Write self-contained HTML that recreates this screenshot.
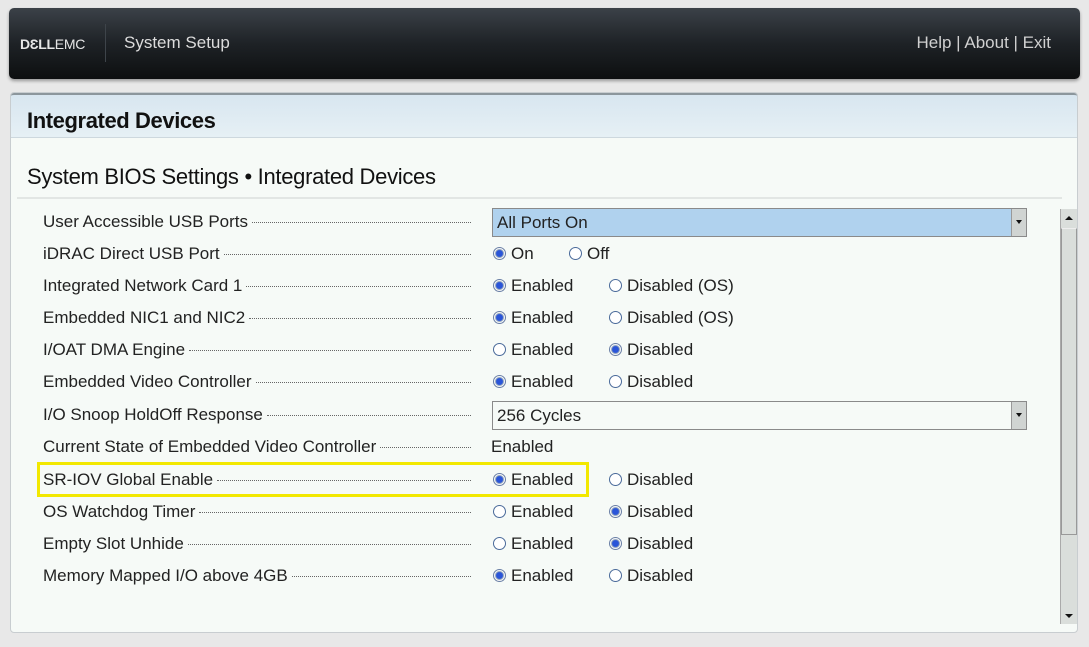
<!DOCTYPE html>
<html><head><meta charset="utf-8"><style>
*{margin:0;padding:0;box-sizing:border-box}
body{width:1089px;height:647px;background:#e8e8e8;font-family:"Liberation Sans",sans-serif;position:relative;overflow:hidden;color:#222}
.hdr{position:absolute;left:9px;top:8px;width:1071px;height:71px;border-radius:5px;background:linear-gradient(#3b4148,#1e2226 50%,#0d0f10);box-shadow:0 2px 3px rgba(0,0,0,.35)}
.logo{position:absolute;left:11px;top:28px;color:#e6e6e6;font-size:14px;letter-spacing:-0.3px}
.logo b{font-weight:bold}
.sep{position:absolute;left:96px;top:16px;width:1px;height:38px;background:#3e444a}
.ss{position:absolute;left:115px;top:25px;color:#dcdcdc;font-size:17px}
.hl{position:absolute;right:29px;top:25px;color:#d0d0d0;font-size:17px}
.panel{position:absolute;left:10px;top:92px;width:1068px;height:541px;background:#f6faf7;border:1px solid #c8cdd0;border-radius:4px}
.tb{position:absolute;left:0;top:0;right:0;height:45px;background:linear-gradient(#d8e6f0,#e6f0f5);border-bottom:1px solid #cdd8de;border-top:2px solid #8c969c;border-radius:3px 3px 0 0}
.tb span{position:absolute;left:16px;top:13px;font-size:22px;font-weight:bold;color:#111;letter-spacing:-0.4px}
.sub{position:absolute;left:27px;top:164px;font-size:22px;color:#111;letter-spacing:-0.3px}
.line{position:absolute;left:17px;top:197px;width:1045px;height:2px;background:#e2e6e4}
.lab{position:absolute;left:43px;width:428px;font-size:17px;display:flex;align-items:baseline;white-space:nowrap}
.lab i{flex:1;border-bottom:1px dotted #666;margin-left:4px;height:1px;position:relative;top:-4px}
.r{position:absolute;font-size:17px;white-space:nowrap}
.r:before{content:"";display:inline-block;width:11px;height:11px;border-radius:50%;border:1px solid #4a6a9a;background:#fff;margin-right:5px;vertical-align:-1px}
.r.on:before{background:radial-gradient(circle,#2a55d8 0,#2a55d8 3px,#9ab 4px,#fff 5px);border-color:#6a7fa5}
.sel{position:absolute;left:492px;width:535px;height:29px;border:1px solid #8a8a8a;font-size:17px;padding:4px 0 0 4px}
.sel .b{position:absolute;right:0;top:0;width:15px;height:27px;background:#d0d4d2;border-left:1px solid #999}
.sel .b:after{content:"";position:absolute;left:4px;top:11px;border:3px solid transparent;border-top:4px solid #111}
.sb{position:absolute;left:1060px;top:209px;width:17px;height:415px;background:#dadedb;border-left:1px solid #aaa}
.th{position:absolute;left:0;top:19px;width:16px;height:307px;background:#dadedb;border:1px solid #999;border-top:1px solid #eee}
.au,.ad{position:absolute;left:4px;border:4px solid transparent}
.au{top:3px;border-bottom:4px solid #111}
.ad{bottom:2px;border-top:4px solid #111}
.yb{position:absolute;left:37px;top:462px;width:552px;height:35px;border:3px solid #f2e800}
</style></head><body>
<div class="hdr"><div class="logo"><b>D&#x190;LL</b>EMC</div><div class="sep"></div><div class="ss">System Setup</div><div class="hl">Help | About | Exit</div></div>
<div class="panel"><div class="tb"><span>Integrated Devices</span></div></div>
<div class="sub">System BIOS Settings • Integrated Devices</div>
<div class="line"></div>

<div class="lab" style="top:212px">User Accessible USB Ports<i></i></div>
<div class="sel" style="top:208px;background:#b0d2ee">All Ports On<div class="b"></div></div>

<div class="lab" style="top:244px">iDRAC Direct USB Port<i></i></div>
<div class="r on" style="left:493px;top:244px">On</div><div class="r" style="left:569px;top:244px">Off</div>

<div class="lab" style="top:276px">Integrated Network Card 1<i></i></div>
<div class="r on" style="left:493px;top:276px">Enabled</div><div class="r" style="left:609px;top:276px">Disabled (OS)</div>

<div class="lab" style="top:308px">Embedded NIC1 and NIC2<i></i></div>
<div class="r on" style="left:493px;top:308px">Enabled</div><div class="r" style="left:609px;top:308px">Disabled (OS)</div>

<div class="lab" style="top:340px">I/OAT DMA Engine<i></i></div>
<div class="r" style="left:493px;top:340px">Enabled</div><div class="r on" style="left:609px;top:340px">Disabled</div>

<div class="lab" style="top:372px">Embedded Video Controller<i></i></div>
<div class="r on" style="left:493px;top:372px">Enabled</div><div class="r" style="left:609px;top:372px">Disabled</div>

<div class="lab" style="top:405px">I/O Snoop HoldOff Response<i></i></div>
<div class="sel" style="top:401px">256 Cycles<div class="b"></div></div>

<div class="lab" style="top:437px">Current State of Embedded Video Controller<i></i></div>
<div style="position:absolute;left:491px;top:437px;font-size:17px">Enabled</div>

<div class="lab" style="top:470px">SR-IOV Global Enable<i></i></div>
<div class="r on" style="left:493px;top:470px">Enabled</div><div class="r" style="left:609px;top:470px">Disabled</div>

<div class="lab" style="top:502px">OS Watchdog Timer<i></i></div>
<div class="r" style="left:493px;top:502px">Enabled</div><div class="r on" style="left:609px;top:502px">Disabled</div>

<div class="lab" style="top:534px">Empty Slot Unhide<i></i></div>
<div class="r" style="left:493px;top:534px">Enabled</div><div class="r on" style="left:609px;top:534px">Disabled</div>

<div class="lab" style="top:566px">Memory Mapped I/O above 4GB<i></i></div>
<div class="r on" style="left:493px;top:566px">Enabled</div><div class="r" style="left:609px;top:566px">Disabled</div>

<div class="yb"></div>
<div class="sb"><div class="au"></div><div class="th"></div><div class="ad"></div></div>
</body></html>
